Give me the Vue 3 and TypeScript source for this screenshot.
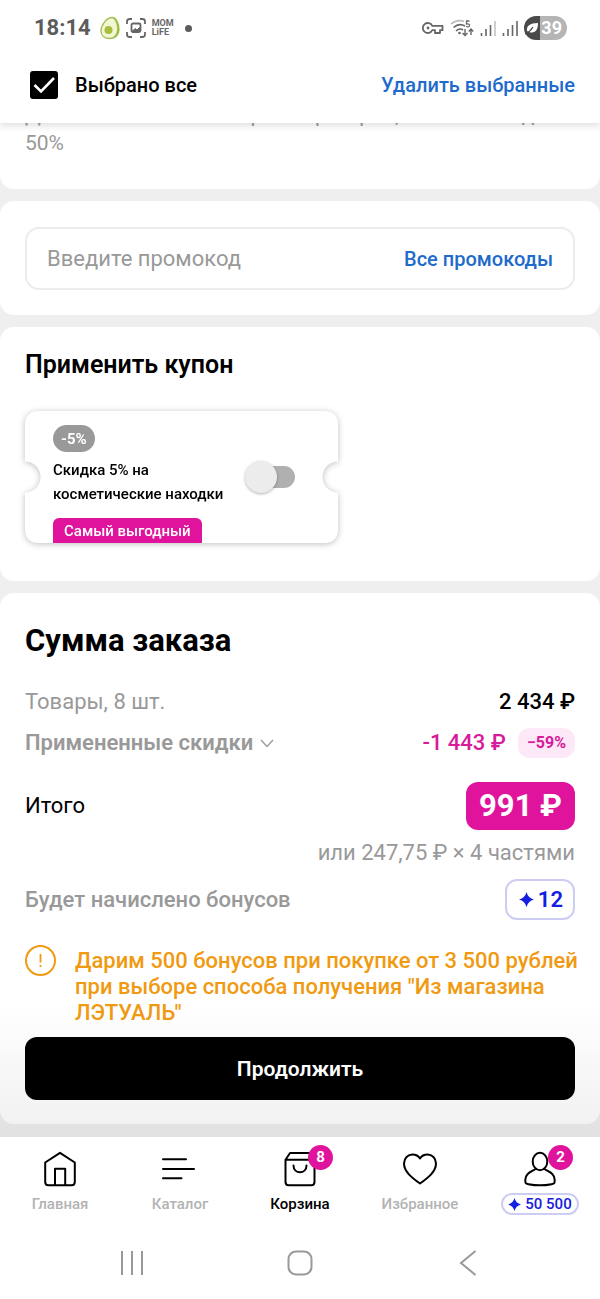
<script setup lang="ts">
import { ref } from 'vue'

interface Tab {
  id: string
  label: string
  badge?: number
  bonus?: boolean
}

const allSelected = ref(true)
const promoCode = ref('')
const couponOn = ref(false)
const activeTab = ref('cart')

const tabs: Tab[] = [
  { id: 'home', label: 'Главная' },
  { id: 'catalog', label: 'Каталог' },
  { id: 'cart', label: 'Корзина', badge: 8 },
  { id: 'favorites', label: 'Избранное' },
  { id: 'profile', label: '50 500', badge: 2, bonus: true },
]
</script>

<template>
  <div class="app">
    <header class="top">
      <div class="status">
        <div class="status-side">
          <span class="time">18:14</span>
          <svg width="20" height="24" viewBox="0 0 20 24">
            <path d="M12 1.5C7 1.500 1 8.500 1 15C1 20 5 22.500 10 22.500C15.500 22.500 19 19 19 13.500C19 8.500 16.500 1.500 12 1.500Z" fill="#f1f6d4" stroke="#9fbd52" stroke-width="1.300" />
            <path d="M13 2C17 3 19 8.500 19 13.500C19 19 15.500 22.500 11 22.500C16 20 17.500 16 17 11C16.700 7 15 4 13 2Z" fill="#9abf3c" />
            <circle cx="8.500" cy="14" r="4" fill="#a9bd3c" />
          </svg>
          <svg width="20" height="20" viewBox="0 0 20 20" fill="none" stroke="#666" stroke-width="1.800">
            <path d="M1 6V3.500Q1 1 3.500 1H6M14 1H16.500Q19 1 19 3.500V6M19 14V16.500Q19 19 16.500 19H14M6 19H3.500Q1 19 1 16.500V14" />
            <rect x="5.500" y="5.500" width="9" height="8.500" rx="1.500" />
            <path d="M6.500 13L9 10.500L11 12L13.500 9.500V13Z" fill="#666" stroke-width="1" />
          </svg>
          <span class="momlife">MOM<br />LiFE</span>
          <span class="dot"></span>
        </div>
        <div class="status-side right">
          <svg width="22" height="14" viewBox="0 0 22 14" fill="none" stroke="#666" stroke-width="1.800">
            <path d="M10.300 4.800A5 5 0 1 0 10.300 9.200H13V12H18V9.200H20.500V4.800Z" stroke-linejoin="round" />
            <circle cx="6" cy="7" r="1.400" fill="#666" stroke="none" />
          </svg>
          <svg width="24" height="18" viewBox="0 0 24 18" fill="none" stroke="#666" stroke-width="1.600">
            <path d="M1 5Q7 0 14 2.500" stroke="#bbb" />
            <path d="M3.500 8.500Q9 3.500 15 7M6 12Q9.500 8.500 13 11" />
            <circle cx="9.500" cy="14" r="1.300" fill="#666" stroke="none" />
            <path d="M19.500 2H16.500V5Q20 4.500 19.500 7Q18.500 8.500 16 7.500" stroke-width="1.300" />
            <path d="M15 10V16M12.500 14L15 16.500L17.500 14M21 16V10.500M18.700 12.500L21 10L23.300 12.500" stroke-width="1.400" />
          </svg>
          <svg width="16" height="18" viewBox="0 0 16 18" stroke="#666" stroke-width="1.600">
            <path d="M1.500 14V17M6 10V17M10.500 6V17" />
            <path d="M15 2V17" stroke="#c4c4c4" />
          </svg>
          <svg width="16" height="18" viewBox="0 0 16 18" stroke="#666" stroke-width="1.600">
            <path d="M1.500 14V17M6 10V17M10.500 6V17M15 2V17" />
          </svg>
          <span class="battery">
            <svg width="14" height="14" viewBox="0 0 14 14">
              <path d="M2 10C1 5 5 2 13 2C13 9 10 13 4 11Z" fill="#fff" />
              <path d="M0 13Q5 11 8 6" fill="none" stroke="#4a4a4a" stroke-width="1.200" />
            </svg>
            <span>39</span>
          </span>
        </div>
      </div>
      <div class="select-row">
        <label class="select-all">
          <span class="box">
            <input v-model="allSelected" type="checkbox" />
            <svg v-if="allSelected" width="28" height="28" viewBox="0 0 28 28" fill="none" stroke="#fff" stroke-width="2.600">
              <path d="M4.500 14L11 20.500L24 7" />
            </svg>
          </span>
          <span>Выбрано все</span>
        </label>
        <button type="button" class="link">Удалить выбранные</button>
      </div>
    </header>

    <main class="content">
      <section class="card terms">
        <p>Для аналогичных товаров партнёров, составляет до<br />50%</p>
      </section>

      <section class="card promo">
        <div class="field">
          <input v-model="promoCode" type="text" placeholder="Введите промокод" aria-label="Промокод" />
          <button type="button" class="link">Все промокоды</button>
        </div>
      </section>

      <section class="card coupons">
        <h2>Применить купон</h2>
        <div class="coupon-shadow">
          <div class="coupon">
            <div class="coupon-body">
              <span class="percent">-5%</span>
              <label for="coupon-switch">Скидка 5% на косметические находки</label>
              <span class="best">Самый выгодный</span>
            </div>
            <input id="coupon-switch" v-model="couponOn" class="switch" type="checkbox" role="switch" />
          </div>
        </div>
      </section>

      <section class="card order">
        <h1>Сумма заказа</h1>
        <div class="row goods">
          <span class="muted">Товары, 8 шт.</span>
          <span class="strong">2 434 ₽</span>
        </div>
        <div class="row discounts">
          <button type="button" class="expand">
            Примененные скидки
            <svg width="14" height="9" viewBox="0 0 14 9" fill="none" stroke="#999" stroke-width="1.300">
              <path d="M1 1L7 7.500L13 1" />
            </svg>
          </button>
          <span class="saved">-1 443 ₽ <span class="saved-percent">−59%</span></span>
        </div>
        <div class="row total">
          <span>Итого</span>
          <span class="sum">991 ₽</span>
        </div>
        <p class="parts">или 247,75 ₽ × 4 частями</p>
        <div class="row bonuses">
          <span class="muted medium">Будет начислено бонусов</span>
          <span class="bonus">
            <svg width="15" height="15" viewBox="0 0 15 15" fill="#1420e0">
              <path d="M7.500 0Q9 6 15 7.500Q9 9 7.500 15Q6 9 0 7.500Q6 6 7.500 0Z" />
            </svg>
            12
          </span>
        </div>
        <div class="notice">
          <svg width="31" height="31" viewBox="0 0 31 31" fill="none" stroke="#f09a12">
            <circle cx="15.500" cy="15.500" r="14.500" stroke-width="2" />
            <path d="M15.500 9V17.500M15.500 20V22" stroke-width="1.800" />
          </svg>
          <p>Дарим 500 бонусов при покупке от 3 500 рублей при выборе способа получения "Из магазина ЛЭТУАЛЬ"</p>
        </div>
      </section>

      <div class="checkout">
        <button type="button">Продолжить</button>
      </div>
    </main>

    <nav class="tabs">
      <a v-for="tab in tabs" :key="tab.id" href="#" class="tab" :class="{ active: tab.id === activeTab }" @click.prevent="activeTab = tab.id">
        <span class="icon">
          <svg width="36" height="36" viewBox="0 0 36 36" fill="none" stroke="#000" stroke-width="2" stroke-linejoin="round" stroke-linecap="round">
            <template v-if="tab.id === 'home'">
              <path d="M18 1.800L32.800 11.500V31Q32.800 34.200 29.600 34.200H6.400Q3.200 34.200 3.200 31V11.500Z" />
              <path d="M13 34V17.800H23.200V34" />
            </template>
            <path v-else-if="tab.id === 'catalog'" d="M1 8.300H24M1 18H32M1 27.300H19.500" />
            <template v-else-if="tab.id === 'cart'">
              <path d="M3.500 8.700L8 2H28L32.500 8.700V31Q32.500 34.200 29.300 34.200H6.700Q3.500 34.200 3.500 31ZM3.500 8.700H32.500" />
              <path d="M11.500 14.500C11.500 23.500 24.500 23.500 24.500 14.500" />
            </template>
            <path v-else-if="tab.id === 'favorites'" d="M18 32.500C11 27.500 2 21 2 12.500C2 7 6 3.500 10.500 3.500C14 3.500 16.500 5 18 7.500C19.500 5 22 3.500 25.500 3.500C30 3.500 34 7 34 12.500C34 21 25 27.500 18 32.500Z" />
            <template v-else>
              <ellipse cx="18" cy="10.500" rx="7.300" ry="8.800" />
              <path d="M13.500 18C10 20.500 3.300 22 3.300 29C3.300 32.500 3.300 32.500 6.500 33.200C13 34.500 23 34.500 29.500 33.200C32.700 32.500 32.700 32.500 32.700 29C32.700 22 26 20.500 22.500 18" />
            </template>
          </svg>
          <span v-if="tab.badge" class="badge">{{ tab.badge }}</span>
        </span>
        <span class="label" :class="{ pill: tab.bonus }">
          <svg v-if="tab.bonus" width="13" height="13" viewBox="0 0 15 15" fill="#1420e0">
            <path d="M7.500 0Q9 6 15 7.500Q9 9 7.500 15Q6 9 0 7.500Q6 6 7.500 0Z" />
          </svg>
          {{ tab.label }}
        </span>
      </a>
    </nav>

    <div class="system">
      <button type="button" aria-label="Недавние">
        <svg width="28" height="28" viewBox="0 0 28 28" stroke="#999" stroke-width="2"><path d="M4 2V26M14 2V26M24 2V26" /></svg>
      </button>
      <button type="button" aria-label="Домой">
        <svg width="28" height="28" viewBox="0 0 28 28" fill="none" stroke="#999" stroke-width="2"><rect x="2.500" y="2.500" width="23" height="23" rx="7.500" /></svg>
      </button>
      <button type="button" aria-label="Назад">
        <svg width="28" height="28" viewBox="0 0 28 28" fill="none" stroke="#999" stroke-width="2"><path d="M21.500 2L7 14L21.500 26" /></svg>
      </button>
    </div>
  </div>
</template>

<style>
body {
  margin: 0;
  background: #fff;
}
</style>

<style scoped>
* {
  box-sizing: border-box;
}

.app {
  display: flex;
  flex-direction: column;
  min-height: 100vh;
  font-family: Roboto, 'Noto Sans', sans-serif;
  font-size: 22px;
  line-height: 26px;
  color: #000;
}

h1,
h2,
p {
  margin: 0;
}

svg {
  display: block;
  flex: none;
}

button {
  padding: 0;
  border: 0;
  background: none;
  font: inherit;
  color: inherit;
  cursor: pointer;
}

.link {
  color: #1f6bcc;
  font-size: 20px;
  font-weight: 500;
}

.top {
  position: relative;
  z-index: 2;
  background: #fff;
  box-shadow: 0 2px 8px rgba(0, 0, 0, 0.15);
}

.status {
  display: flex;
  align-items: center;
  justify-content: space-between;
  height: 50px;
  padding: 6px 33px 0 34px;
}

.status-side {
  display: flex;
  align-items: center;
  gap: 6px;
}

.status-side .time {
  margin-right: 3px;
  font-size: 22px;
  font-weight: 700;
  color: #5c5c5c;
}

.momlife {
  font-size: 9px;
  line-height: 9px;
  font-weight: 700;
  color: #666;
}

.dot {
  width: 7px;
  height: 7px;
  margin-left: 5px;
  border-radius: 50%;
  background: #5c5c5c;
}

.battery {
  display: flex;
  align-items: center;
  gap: 2px;
  height: 24px;
  padding: 0 5px 0 1px;
  border-radius: 12px;
  background: linear-gradient(90deg, #4a4a4a 16px, #b5b5b5 16px);
  color: #fff;
  font-size: 18px;
  font-weight: 700;
}

.select-row {
  display: flex;
  align-items: center;
  justify-content: space-between;
  height: 73px;
  padding: 0 25px 3px 30px;
  font-size: 20px;
  font-weight: 500;
}

.select-all {
  display: flex;
  align-items: center;
  gap: 17px;
}

.box {
  position: relative;
}

.box input {
  display: block;
  width: 28px;
  height: 28px;
  margin: 0;
  appearance: none;
  border: 2px solid #000;
  border-radius: 3px;
}

.box input:checked {
  background: #000;
}

.box svg {
  position: absolute;
  inset: 0;
  pointer-events: none;
}

.content {
  position: relative;
  display: flex;
  flex: 1;
  flex-direction: column;
  gap: 12px;
  padding-bottom: 12px;
  overflow: hidden;
  background: #efefef;
}

.card {
  padding: 25px;
  border-radius: 14px;
  background: #fff;
}

.terms {
  margin-top: -22px;
  padding-top: 0;
  padding-bottom: 32px;
  border-radius: 0 0 14px 14px;
  color: #999;
  font-size: 21px;
  line-height: 28px;
}

.promo {
  padding-top: 26px;
}

.field {
  display: flex;
  align-items: center;
  justify-content: space-between;
  height: 63px;
  padding: 0 20px;
  border: 2px solid #ececec;
  border-radius: 14px;
}

.field input {
  flex: 1;
  min-width: 0;
  padding: 0;
  border: 0;
  outline: 0;
  background: none;
  font: inherit;
}

.field input::placeholder {
  color: #999;
  opacity: 1;
}

.coupons {
  padding-bottom: 38px;
}

.coupons h2 {
  margin-bottom: 34px;
  font-size: 25px;
  line-height: 25px;
  font-weight: 600;
}

.coupon-shadow {
  width: 313px;
  filter: drop-shadow(0 1px 3px rgba(0, 0, 0, 0.25));
}

.coupon {
  display: flex;
  align-items: center;
  justify-content: space-between;
  padding: 0 43px 0 28px;
  border-radius: 12px;
  background: #fff;
  mask:
    radial-gradient(circle at 0 50%, transparent 15px, #000 16px),
    radial-gradient(circle at 100% 50%, transparent 15px, #000 16px);
  mask-composite: intersect;
}

.coupon-body {
  display: flex;
  flex-direction: column;
  align-items: flex-start;
  width: 184px;
  padding-top: 14px;
  font-size: 15px;
  font-weight: 500;
  line-height: 24px;
}

.percent {
  height: 27px;
  margin-bottom: 6px;
  padding: 0 8px;
  border-radius: 14px;
  background: #999;
  color: #fff;
  font-weight: 700;
  line-height: 28px;
}

.best {
  height: 25px;
  margin-top: 12px;
  padding: 0 11px;
  border-radius: 6px 6px 0 0;
  background: #e0149c;
  color: #fff;
  line-height: 26px;
}

.switch {
  position: relative;
  width: 44px;
  height: 22px;
  margin: 0;
  appearance: none;
  border-radius: 11px;
  background: #b0b0b0;
}

.switch::before {
  position: absolute;
  top: -5px;
  left: -6px;
  width: 32px;
  height: 32px;
  border-radius: 50%;
  background: #ececec;
  box-shadow: 0 1px 3px rgba(0, 0, 0, 0.3);
  content: '';
}

.switch:checked {
  background: #f3a1d7;
}

.switch:checked::before {
  left: 18px;
  background: #e0149c;
}

.order {
  padding-top: 28px;
  padding-bottom: 98px;
}

.order h1 {
  margin-bottom: 26px;
  font-size: 31px;
  line-height: 40px;
  font-weight: 700;
}

.row {
  display: flex;
  align-items: center;
  justify-content: space-between;
}

.muted {
  color: #999;
}

.medium {
  font-weight: 500;
}

.strong {
  font-weight: 500;
}

.goods {
  height: 30px;
  margin-bottom: 11px;
}

.discounts {
  height: 30px;
  margin-bottom: 24px;
}

.expand {
  display: flex;
  align-items: center;
  gap: 7px;
  color: #999;
  font-weight: 600;
}

.saved {
  display: flex;
  align-items: center;
  gap: 12px;
  color: #d81b9a;
  font-weight: 500;
}

.saved-percent {
  padding: 0 9px;
  border-radius: 12px;
  background: #fde8f7;
  font-size: 16px;
  line-height: 30px;
  font-weight: 700;
}

.total {
  margin-bottom: 10px;
}

.sum {
  padding: 0 13px;
  border-radius: 12px;
  background: #e0149c;
  color: #fff;
  font-size: 31px;
  line-height: 48px;
  font-weight: 700;
}

.parts {
  margin-bottom: 13px;
  color: #999;
  text-align: right;
}

.bonuses {
  margin-bottom: 28px;
}

.bonus {
  display: flex;
  align-items: center;
  gap: 4px;
  height: 41px;
  padding: 0 10px 0 12px;
  border: 2px solid #cdcdf3;
  border-radius: 12px;
  color: #1420e0;
  font-weight: 600;
}

.notice {
  display: flex;
  gap: 19px;
  margin-right: -10px;
  color: #f09a12;
  font-weight: 500;
}

.notice svg {
  margin-top: -3px;
}

.checkout {
  position: absolute;
  right: 0;
  bottom: 0;
  left: 0;
  padding: 36px 25px 37px;
  background: linear-gradient(rgba(0, 0, 0, 0), rgba(0, 0, 0, 0.06));
}

.checkout button {
  display: block;
  width: 100%;
  height: 63px;
  border-radius: 12px;
  background: #000;
  color: #fff;
  font-size: 21px;
  font-weight: 600;
}

.tabs {
  display: grid;
  grid-template-columns: repeat(5, 1fr);
  height: 90px;
  padding-top: 14px;
  background: #fff;
}

.tab {
  display: flex;
  flex-direction: column;
  align-items: center;
  gap: 6px;
  color: #b3b3b3;
  font-size: 15px;
  font-weight: 500;
  line-height: 22px;
  text-decoration: none;
}

.tab.active {
  color: #000;
}

.icon {
  position: relative;
}

.badge {
  position: absolute;
  top: -6px;
  left: 26px;
  width: 25px;
  height: 25px;
  border-radius: 50%;
  background: #e0149c;
  color: #fff;
  font-weight: 700;
  line-height: 25px;
  text-align: center;
}

.label {
  display: flex;
  align-items: center;
}

.pill {
  gap: 4px;
  height: 22px;
  padding: 0 5px;
  border: 2px solid #cdcdf3;
  border-radius: 11px;
  color: #1420e0;
}

.system {
  display: grid;
  grid-template-columns: repeat(3, 1fr);
  align-items: center;
  justify-items: center;
  height: 72px;
  padding: 0 8%;
  background: #fff;
}
</style>
